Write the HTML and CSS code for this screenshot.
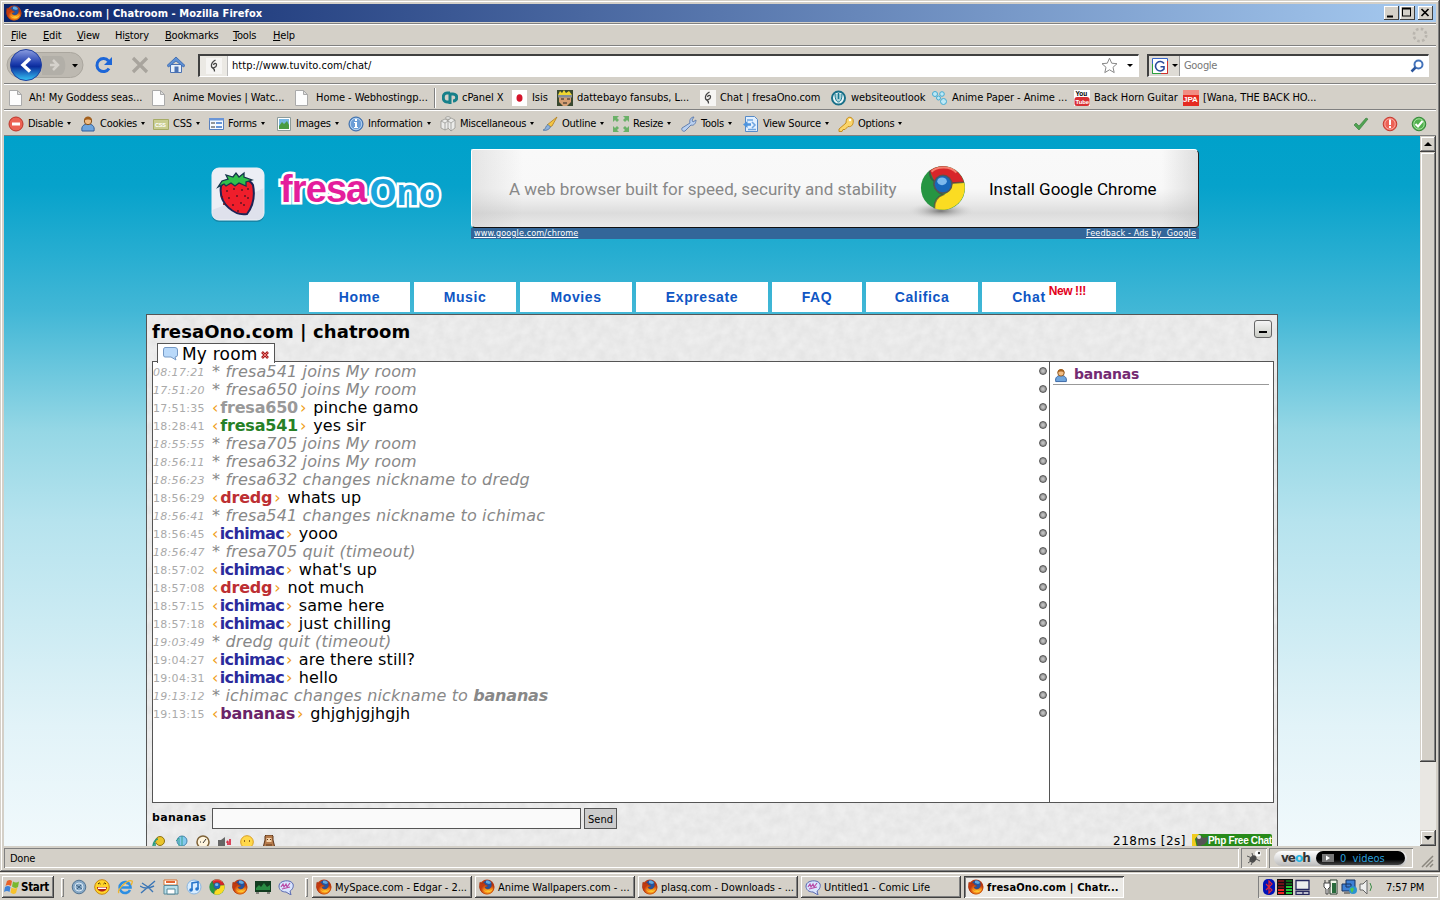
FILE: index.html
```html
<!DOCTYPE html>
<html lang="en">
<head>
<meta charset="utf-8">
<title>fresaOno.com | Chatroom - Mozilla Firefox</title>
<link rel="stylesheet" href="styles.css">
</head>
<body>
<svg class="sprite" aria-hidden="true">
  <defs>
    <linearGradient id="gBack" x1="0" y1="0" x2="0" y2="1"><stop offset="0" stop-color="#8c9ee0"/><stop offset=".45" stop-color="#1e3dae"/><stop offset=".55" stop-color="#0b2c9c"/><stop offset="1" stop-color="#35c4f5"/></linearGradient>
    <radialGradient id="gFox" cx=".6" cy=".7"><stop offset="0" stop-color="#ffc428"/><stop offset=".6" stop-color="#f07a16"/><stop offset="1" stop-color="#c23a10"/></radialGradient>
    <radialGradient id="gShadow"><stop offset="0" stop-color="#777"/><stop offset="1" stop-color="#ddd" stop-opacity="0"/></radialGradient>
  </defs>
  <symbol id="fox" viewBox="0 0 16 16"><circle cx="8" cy="8" r="7.500" fill="url(#gFox)"/><circle cx="8.500" cy="6.200" r="5" fill="#2453a0"/><path d="M7 2c2-1 4 0 5 2l-2 1-3-1z" fill="#62a9df"/><path d="M1 3l2 1.500C5 3.500 6 4 6 5.500l3 1.500-3 1c0 2 3 3 5 1.500 2-1.500 2-4 1.500-6 3 3 3 7 .5 9.500-3 3-8 2.500-10.500-.5S0 6 1 3z" fill="url(#gFox)" stroke="#9b2d0c" stroke-width=".4"/><path d="M4 10c3 4 8 3 10-1-1 5-8 6-10 1z" fill="#ffd43b"/></symbol>
  <symbol id="page" viewBox="0 0 16 16"><path d="M1.500 .5h8l4 4v11h-12z" fill="#fdfdfd" stroke="#aaa"/><path d="M9.500 .5v4h4z" fill="#ddd" stroke="#aaa"/></symbol>
  <symbol id="chatfav" viewBox="0 0 16 16"><path fill="#f6f5f3" d="M0 0h16v16H0z"/><path d="M9.500 2C6 4 5 6 5.500 8.500S10.500 9.500 10.500 7 8 5 7.500 7M6 9.500c1 1 3 1 2.500 4" fill="none" stroke="#444" stroke-width="1.300"/></symbol>
  <symbol id="chrome" viewBox="0 0 48 48"><circle cx="24" cy="24" r="23" fill="#269542"/><path d="M10 6a23 23 0 0 1 36 12L33 19 24 11 15 17z" fill="#d8252a"/><path d="M46 18A23 23 0 0 1 15 45c0-9 3-11 9-14 6-2 9-6 9-12z" fill="#fbdc22"/><path d="M12 7c5-5 19-7 26 1" fill="none" stroke="#f57d6d" stroke-width="2"/><path d="M10 6q0 8 5 11-2 9 9 14-9 3-9 14M33 19l13-1" fill="none" stroke="#444" stroke-opacity=".7" stroke-width="1.800"/><circle cx="24" cy="20" r="10" fill="#555"/><circle cx="24" cy="20" r="8.500" fill="#1768ba"/><ellipse cx="23" cy="17" rx="5" ry="4" fill="#7bb9ed"/></symbol>
  <symbol id="comic" viewBox="0 0 16 16"><path d="M1 7c0-6 12-7 14-2 1 3-1 6-3 7l1 4-5-3C4 13 1 11 1 7z" fill="#d9e5ff" stroke="#5868b0"/><path d="M3 8l2-3 1 3 2-3 1 3 3-4M4 10l4-1 4-1" fill="none" stroke="#b94aa5" stroke-width="1.200"/></symbol>
  <symbol id="smile" viewBox="0 0 16 16"><circle cx="8" cy="8" r="7.300" fill="#ffd529" stroke="#c78712"/><path d="M3 8h10c0 6-10 6-10 0z" fill="#b02318"/><path d="M4 8.500h8v1.500H4z" fill="#fff"/><path d="M4 5q1.500-2 2.500 0M9.500 5q1-2 2.500 0" fill="none" stroke="#3a2500"/></symbol>
  <symbol id="user" viewBox="0 0 16 16"><path d="M2 15c-1-5 2-7 6-7s7 2 6 7z" fill="#6fa5dd" stroke="#2f5d9b"/><circle cx="8" cy="5" r="3.700" fill="#f2bd84" stroke="#80501e"/><path d="M4 5c0-6 8-6 8 0-2-2-6-2-8 0z" fill="#a4601d"/></symbol>
</svg>

<div class="window">
  <header class="titlebar">
    <svg class="i16"><use href="#fox"/></svg>
    <span class="title">fresaOno.com | Chatroom - Mozilla Firefox</span>
    <div class="winbtns">
      <svg class="winbtn" viewBox="0 0 15 13"><path d="M3 9h6v2H3z"/></svg>
      <svg class="winbtn" viewBox="0 0 15 13"><path d="M2 1h9v9H2zM3 3v6h7V3z" fill-rule="evenodd"/></svg>
      <svg class="winbtn close" viewBox="0 0 15 13"><path d="M3.500 2.500l7 7m0-7l-7 7" stroke="#000" stroke-width="1.700"/></svg>
    </div>
  </header>

  <nav class="menubar">
    <span><u>F</u>ile</span><span><u>E</u>dit</span><span><u>V</u>iew</span><span>Hi<u>s</u>tory</span><span><u>B</u>ookmarks</span><span><u>T</u>ools</span><span><u>H</u>elp</span>
    <svg class="throbber" viewBox="0 0 16 16"><circle cx="8" cy="8" r="6.200" fill="none" stroke="#b9b5ae" stroke-width="2.600" stroke-dasharray="2.600 2.270"/></svg>
  </nav>

  <div class="navbar">
    <svg class="backfwd" viewBox="0 0 80 36">
      <rect x="3" y="5.500" width="76" height="25" rx="12.500" fill="#bdb9b1" stroke="#aaa69e"/>
      <path d="M38 9h18c7 0 7 19 0 19H38z" fill="#b2afa8"/>
      <circle cx="22" cy="18" r="15.500" fill="url(#gBack)" stroke="#203f9e"/>
      <path d="M26 11.500l-7 6.500 7 6.500" fill="none" stroke="#fff" stroke-width="3.400"/>
      <path d="M49 13l5 5-5 5M46 18h8" fill="none" stroke="#d5d2cc" stroke-width="2.500"/>
      <path d="M68 17h6l-3 3.500z"/>
    </svg>
    <svg class="ic-reload" viewBox="0 0 18 18"><path d="M14 12.500a6.500 6.500 0 1 1-.5-7.500" fill="none" stroke="#1c66d8" stroke-width="3"/><path d="M17 1v8H9z" fill="#1c66d8"/></svg>
    <svg class="ic-stop" viewBox="0 0 18 18"><path d="M2 2l14 14M16 2L2 16" stroke="#a8a49d" stroke-width="3.200"/></svg>
    <svg class="ic-home" viewBox="0 0 18 18"><path d="M3.500 8.500h11v8h-11z" fill="#e6effa" stroke="#4a72b4"/><path d="M0 9.500L9 1l9 8.500-1.500 1.500L9 5l-7.500 6z" fill="#5c8fd4" stroke="#3563ab" stroke-width=".8"/><path d="M7.500 10.500h4v6h-4z" fill="#4a72b4"/></svg>
    <div class="urlbar">
      <div class="siteicon"><svg class="i16"><use href="#chatfav"/></svg></div>
      <span class="url">http://www.tuvito.com/chat/</span>
      <svg class="star" viewBox="0 0 17 17"><path d="M8.500 1.200l2.200 5 5.300.5-4 3.600 1.200 5.300-4.700-2.800-4.700 2.800L5 10.300 1 6.700l5.300-.5z" fill="#fff" stroke="#888"/></svg>
      <i class="arrow"></i>
    </div>
    <div class="search">
      <div class="engine"><svg class="i16" viewBox="0 0 16 16"><path d="M.5.500h15v15H.5z" fill="#fff" stroke="#3764c8"/><path d="M.5 6v9.500h8" fill="none" stroke="#2ca13c"/><path d="M15.500 3v12.500H9" fill="none" stroke="#d2322d"/><path d="M12 5.500A4.700 4.700 0 1 0 12 11V8.700H8.500" fill="none" stroke="#2a4a9c" stroke-width="1.600"/></svg><i class="arrow"></i></div>
      <span class="ghost">Google</span>
      <svg class="mag" viewBox="0 0 14 14"><circle cx="8.500" cy="5.500" r="4" fill="#fff" stroke="#4373ba" stroke-width="2"/><path d="M5.500 8.500L1.500 12.500" stroke="#2c559b" stroke-width="2.500"/></svg>
    </div>
  </div>

  <div class="bookmarks">
    <span class="bm far"><svg class="i16"><use href="#page"/></svg>Ah! My Goddess seas...</span>
    <span class="bm far"><svg class="i16"><use href="#page"/></svg>Anime Movies | Watc...</span>
    <span class="bm far"><svg class="i16"><use href="#page"/></svg>Home - Webhostingp...</span>
    <i class="sep"></i>
    <span class="bm"><svg class="i16" viewBox="0 0 16 16"><path d="M8 3H5C0 3 0 12 5 12h2M8 14V4h3c5 0 5 7 0 7" fill="none" stroke="#17808a" stroke-width="3"/></svg>cPanel X</span>
    <span class="bm"><svg class="i16" viewBox="0 0 16 16"><path d="M0 0h15v16H0z" fill="#fff"/><ellipse cx="7.500" cy="8" rx="3" ry="3.800" fill="#d4132a"/></svg>Isis</span>
    <span class="bm"><svg class="i16" viewBox="0 0 16 16"><path d="M0 0h16v16H0z" fill="#3a4930"/><path d="M1 5l2-4 2 2 2-3 2 3 3-2 3 4z" fill="#f0d832"/><path d="M2 7h12v5l-4 4H6l-4-4z" fill="#d6a074"/><path d="M1 5h14v2.500H1z" fill="#858f99"/><path d="M4 9h3m3 0h3m-7 4h4" stroke="#222"/></svg>dattebayo fansubs, L...</span>
    <span class="bm"><svg class="i16"><use href="#chatfav"/></svg>Chat | fresaOno.com</span>
    <span class="bm"><svg class="i16" viewBox="0 0 16 16"><circle cx="7.500" cy="8" r="6.500" fill="#edf7f9" stroke="#176f88" stroke-width="2"/><path d="M4 4c0 6 2 8 3.500 8S11 10 11 4" fill="#a9d3da" stroke="#167790"/><path d="M7.500 3v6" stroke="#167790" stroke-width="1.500"/></svg>websiteoutlook</span>
    <span class="bm"><svg class="i16" viewBox="0 0 16 16"><g fill="#bce9f7" stroke="#43abd2"><circle cx="3" cy="4" r="2.500"/><circle cx="10" cy="4" r="2.300"/><circle cx="6.500" cy="8" r="2"/><circle cx="11.500" cy="11.500" r="3"/></g></svg>Anime Paper - Anime ...</span>
    <span class="bm"><svg class="i16" viewBox="0 0 16 16"><path d="M0 0h16v16H0z" fill="#fff"/><rect x=".5" y="7" width="15" height="9" rx="2.500" fill="#d93034"/><text x="1.500" y="6" class="yt">You</text><text x="1.500" y="14" class="yt w">Tube</text></svg>Back Horn Guitar</span>
    <span class="bm"><svg class="i16" viewBox="0 0 16 16"><path d="M0 0h16v16H0z" fill="#e52b22"/><path d="M0 0h16v5H0z" fill="#f18d83"/><text x="0" y="12" class="jpa">JPA</text></svg>[Wana, THE BACK HO...</span>
  </div>

  <div class="devbar">
    <span class="dv"><svg class="i16" viewBox="0 0 16 16"><circle cx="8" cy="8" r="7" fill="#ec6254" stroke="#bb3529"/><path d="M4 6.500h8v3H4z" fill="#fff"/></svg>Disable<i class="arrow"></i></span>
    <span class="dv"><svg class="i16"><use href="#user"/></svg>Cookies<i class="arrow"></i></span>
    <span class="dv"><svg class="i16" viewBox="0 0 16 16"><path d="M.5 3.500h15v10H.5z" fill="#c9cd90" stroke="#a6ac66"/><text x="2" y="11" class="css">CSS</text></svg>CSS<i class="arrow"></i></span>
    <span class="dv"><svg class="i16" viewBox="0 0 16 16"><path d="M1.500 2.500h14v11h-14z" fill="#f7faff" stroke="#5880bd"/><path d="M1 2h15v2.500H1zM8 6h6v2H8zm0 4h6v2H8z" fill="#6a95d6"/><path d="M3 7h4m-4 4h4" stroke="#333"/></svg>Forms<i class="arrow"></i></span>
    <span class="dv"><svg class="i16" viewBox="0 0 16 16"><path d="M1.500 1.500h13v13h-13z" fill="#fff" stroke="#8d9b99"/><path d="M3 3h10v10H3z" fill="#78b7e2"/><path d="M3 10l3-4 2 2 3-3 2 4v4H3z" fill="#4b9b43"/></svg>Images<i class="arrow"></i></span>
    <span class="dv"><svg class="i16" viewBox="0 0 16 16"><circle cx="8" cy="8" r="7" fill="#6a9dd7" stroke="#3668a7"/><circle cx="8" cy="8" r="5.700" fill="none" stroke="#b6d2ef"/><path d="M7 3h2v2H7zm-1 3h3v5h1v1H6v-1h1V7H6z" fill="#fff"/></svg>Information<i class="arrow"></i></span>
    <span class="dv"><svg class="i16" viewBox="0 0 16 16"><g fill="#ececea" stroke="#8e8e8a" stroke-width=".7"><path d="M1 5l4-2 4 2v7l-4 2-4-2z"/><path d="M8 4l3-2 4 2v8l-4 3-3-3z"/><path d="M1 5l4 2 3-2M5 7v7M8 5l3 2 4-3M11 7v8"/><ellipse cx="8" cy="2" rx="2.500" ry="1.300"/></g></svg>Miscellaneous<i class="arrow"></i></span>
    <span class="dv"><svg class="i16" viewBox="0 0 16 16"><path d="M15 1l-5 9-3 1-2-2z" fill="#f5c643" stroke="#b07c1d" stroke-width=".8"/><path d="M6 8.500l2.500 2.500C7 14 3 15 1 14c3 0 2-4 5-5.500z" fill="#8fb2dc" stroke="#4d749f" stroke-width=".8"/></svg>Outline<i class="arrow"></i></span>
    <span class="dv"><svg class="i16" viewBox="0 0 16 16"><path d="M0 0h6L4 2l2 2-2 2-2-2-2 2zM10 0h6v6l-2-2-2 2-2-2 2-2zM0 10l2 2 2-2 2 2-2 2 2 2H0zM16 10v6h-6l2-2-2-2 2-2 2 2z" fill="#6bb168"/></svg>Resize<i class="arrow"></i></span>
    <span class="dv"><svg class="i16" viewBox="0 0 16 16"><path d="M9 7c-1-3 1-6 4-6l-2 3 1 2 3-2c0 4-3 6-5 5l-6 6c-2 1-4-1-3-3z" fill="#b9d0f0" stroke="#6380af"/></svg>Tools<i class="arrow"></i></span>
    <span class="dv"><svg class="i16" viewBox="0 0 16 16"><path d="M2.500.500h9l3 3v12h-12z" fill="#e2f0ff" stroke="#568bc8"/><path d="M4 4h6M9 6l3 3-3 3M5 13.500h8" fill="none" stroke="#6fa5e0" stroke-width="1.500"/><path d="M0 8.500L4.500 5v2.300H8v2.500H4.500V12z" fill="#4e94de"/></svg>View Source<i class="arrow"></i></span>
    <span class="dv"><svg class="i16" viewBox="0 0 16 16"><path d="M8 7L1 13v2.500h3l1-2h2l3-3c4 1 6-3 5-7C13 0 8 0 8 7z" fill="#fbd569" stroke="#c58d1f"/><circle cx="12" cy="4" r="1.200" fill="#fff"/></svg>Options<i class="arrow"></i></span>
    <div class="devstatus">
      <svg class="i16" viewBox="0 0 16 16"><path d="M1 9l2-2 3 3 7-8 2 1-9 11z" fill="#50a352" stroke="#337a39" stroke-width=".6"/></svg>
      <svg class="i16" viewBox="0 0 16 16"><circle cx="8" cy="8" r="6.800" fill="#ec6155" stroke="#c43a2f"/><circle cx="8" cy="8" r="5.200" fill="none" stroke="#ffc4bd" stroke-width=".7"/><path d="M7 3.500h2V9H7zm0 6.500h2v2H7z" fill="#fff"/></svg>
      <svg class="i16" viewBox="0 0 16 16"><circle cx="8" cy="8" r="6.800" fill="#51b14d" stroke="#35873a"/><circle cx="8" cy="8" r="5.200" fill="none" stroke="#c9f0c3" stroke-width=".7"/><path d="M4.500 8l2.500 2.500L11.500 5" fill="none" stroke="#fff" stroke-width="2"/></svg>
    </div>
  </div>

  <div class="viewport">
    <main class="page">
      <div class="top">
        <svg class="berry" viewBox="0 0 56 58">
          <rect x="2" y="4" width="52" height="52" rx="7" fill="#16708d" opacity=".6"/>
          <rect x="2" y="2" width="52" height="52" rx="7" fill="#dfe1ec" stroke="#eef0f6"/>
          <path d="M2 10q0-8 8-8h36q8 0 8 8v12Q30 34 2 44z" fill="#eceef5"/>
          <path d="M11 20c4-8 27-10 32-1 2 10 0 21-6 29-11 2-29-9-26-28z" fill="#ef1e2b" stroke="#1d2456" stroke-width="2"/>
          <path d="M8 21l4-6 6-2-2-4 7 2 3-4 3 4 5-4 0 4 8 3-6 2 0 4-7-3-4 3-4-3-5 3-2-2z" fill="#30c04b" stroke="#17364c" stroke-width="1.300"/>
          <path d="M17 24v2m7-4v2m8-1v2m6-3v2m-19 7v2m8-4v2m8-2v2m-12 7v2m8-4v2m-3 6v2m6-8v2m4-9v2m-24 4v2m-2-9v2" stroke="#6a1423" stroke-width="1.600"/>
        </svg>
        <h1 class="logo"><span class="pink">fresa</span><span class="blue">Ono</span></h1>
        <div class="ad">
          <div class="banner">
            <span class="slogan">A web browser built for speed, security and stability</span>
            <svg class="chromelogo" viewBox="0 0 72 60"><ellipse cx="34" cy="50" rx="34" ry="9" fill="url(#gShadow)"/><use href="#chrome" x="10" y="4" width="52" height="46"/></svg>
            <span class="install">Install Google Chrome</span>
          </div>
          <div class="adfoot"><u>www.google.com/chrome</u><u>Feedback - Ads by&nbsp; Google</u></div>
        </div>
      </div>

      <nav class="tabs"><a>Home</a><a>Music</a><a>Movies</a><a>Expresate</a><a>FAQ</a><a>Califica</a><a>Chat<sup>New !!!</sup></a></nav>

      <section class="chat">
        <div class="chathead">
          <h2>fresaOno.com | chatroom</h2>
          <button class="min"><i></i></button>
        </div>
        <div class="roomtabs">
          <div class="room">
            <svg class="bubble" viewBox="0 0 15 14"><path d="M2 .5h10q2.500 0 2.500 2.500v5q0 2-2.500 2l1 3-5-3H2q-1.500 0-1.500-2V3Q.5.500 2 .5z" fill="#b9d9fa" stroke="#7599c5"/></svg>
            <span>My room</span>
            <svg class="x" viewBox="0 0 8 8"><path d="M1 1l6 6m0-6L1 7" stroke="#a41e1e" stroke-width="2.600"/><path d="M1.500 1.500l5 5m0-5l-5 5" stroke="#f07a76" stroke-width="1"/></svg>
          </div>
        </div>
        <div class="panes">
          <div class="log">
            <p class="sys"><time>08:17:21</time><span>* fresa541 joins My room</span></p>
            <p class="sys"><time>17:51:20</time><span>* fresa650 joins My room</span></p>
            <p><time>17:51:35</time><span><b class="n-gray">fresa650</b>pinche gamo</span></p>
            <p><time>18:28:41</time><span><b class="n-green">fresa541</b>yes sir</span></p>
            <p class="sys"><time>18:55:55</time><span>* fresa705 joins My room</span></p>
            <p class="sys"><time>18:56:11</time><span>* fresa632 joins My room</span></p>
            <p class="sys"><time>18:56:23</time><span>* fresa632 changes nickname to dredg</span></p>
            <p><time>18:56:29</time><span><b class="n-red">dredg</b>whats up</span></p>
            <p class="sys"><time>18:56:41</time><span>* fresa541 changes nickname to ichimac</span></p>
            <p><time>18:56:45</time><span><b class="n-blue">ichimac</b>yooo</span></p>
            <p class="sys"><time>18:56:47</time><span>* fresa705 quit (timeout)</span></p>
            <p><time>18:57:02</time><span><b class="n-blue">ichimac</b>what's up</span></p>
            <p><time>18:57:08</time><span><b class="n-red">dredg</b>not much</span></p>
            <p><time>18:57:15</time><span><b class="n-blue">ichimac</b>same here</span></p>
            <p><time>18:57:18</time><span><b class="n-blue">ichimac</b>just chilling</span></p>
            <p class="sys"><time>19:03:49</time><span>* dredg quit (timeout)</span></p>
            <p><time>19:04:27</time><span><b class="n-blue">ichimac</b>are there still?</span></p>
            <p><time>19:04:31</time><span><b class="n-blue">ichimac</b>hello</span></p>
            <p class="sys"><time>19:13:12</time><span>* ichimac changes nickname to <strong>bananas</strong></span></p>
            <p><time>19:13:15</time><span><b class="n-purple">bananas</b>ghjghjgjhgjh</span></p>
          </div>
          <aside class="users">
            <div class="member"><svg class="face" viewBox="0 0 16 16"><use href="#user"/></svg><span>bananas</span></div>
          </aside>
        </div>
        <div class="compose">
          <label>bananas</label><div class="field"></div><div class="send">Send</div>
        </div>
        <div class="tools">
          <svg class="t" viewBox="0 0 14 14"><circle cx="8" cy="6" r="4.500" fill="#eac52b" stroke="#8f7315"/><path d="M1 12c0-5 3-8 5-8M3 12V8" fill="none" stroke="#2a9a7b" stroke-width="1.600"/></svg>
          <svg class="t" viewBox="0 0 14 14"><circle cx="8" cy="6" r="5" fill="#83c9ee" stroke="#4784ad"/><path d="M8 1v10M2 6l3-3v8" fill="none" stroke="#37a190"/></svg>
          <svg class="t" viewBox="0 0 14 14"><circle cx="7" cy="7" r="6" fill="#fff5de" stroke="#7e6238" stroke-width="1.500"/><path d="M7 8l3-4M4 7h1" stroke="#333"/></svg>
          <svg class="t" viewBox="0 0 14 14"><path d="M0 5h3l4-3v9H0z" fill="#666"/><path d="M9 8q1-4 1 2m2-6v6" fill="none" stroke="#d8334a" stroke-width="1.800"/></svg>
          <svg class="t" viewBox="0 0 14 14"><circle cx="7" cy="7" r="6.300" fill="#ffd84a" stroke="#d99e22"/><path d="M4 6h1m4 0h1" stroke="#73460b" stroke-width="1.500"/></svg>
          <svg class="t" viewBox="0 0 14 14"><path d="M3 1l1-1h6l1 1v4l2 8H1l2-8z" fill="#b57a4b" stroke="#5c361b"/><path d="M4.500 3h5v4h-5z" fill="#f4d4ae"/><path d="M5 4.500h1m2 0h1M4 10h6" stroke="#5c361b"/></svg>
          <span class="ping">218ms [2s]</span>
          <div class="pfc"><svg viewBox="0 0 16 14"><path d="M0 0h7l-4 5 2 9H0z" fill="#f1cb1e"/><path d="M4 4q5-5 7 0l5-1q-1 8-6 8L6 14z" fill="#555"/><circle cx="7" cy="3" r="2" fill="#ddd"/></svg><span>Php Free Chat</span></div>
        </div>
      </section>
    </main>
    <div class="scroll">
      <div class="sbtn"><i class="up"></i></div><div class="thumb"></div><div class="track"></div><div class="sbtn"><i class="down"></i></div>
    </div>
  </div>

  <footer class="status">
    <div class="msg">Done</div>
    <div class="bug"><svg class="i16" viewBox="0 0 16 16"><ellipse cx="7" cy="9" rx="3" ry="4" transform="rotate(40 7 9)" fill="#494949"/><path d="M1 6l5 2M2 13l4-3M5 15l2-4M6 3l1 4m3 2l4 2m-4-5l3-5" stroke="#555"/><circle cx="12" cy="3.500" r="3" fill="#fff"/><circle cx="13" cy="3" r="1.200" fill="#333"/></svg></div>
    <div class="veohcell"><div class="veoh"><b>ve<em>o</em>h</b><span><svg viewBox="0 0 12 8"><path d="M0 0h12v8H0z" fill="#777"/><path d="M4 1.500v5L8 4z" fill="#fff"/></svg>0&nbsp; videos</span></div></div>
    <svg class="grip" viewBox="0 0 14 14"><path d="M2 13L13 2M6 13l7-7M10 13l3-3" stroke="#8b877f" stroke-width="1.500"/></svg>
  </footer>
</div>

<div class="taskbar">
  <div class="start"><svg viewBox="0 0 16 16"><path d="M3 2q3-2 5 0L7 7Q4 5 1.500 7z" fill="#e8632b"/><path d="M9 2.500q3 2 6 0L14 8q-3 2-6-.5z" fill="#79b82d"/><path d="M1 8q3-2 5.500 0L5.500 13Q3 11 0 13z" fill="#3f83d8"/><path d="M7.500 8.500q3 2 6 0L12 14q-3 2-5.500-.5z" fill="#f7c22c"/></svg>Start</div>
  <i class="tsep"></i>
  <div class="quick">
    <svg class="i16" viewBox="0 0 16 16"><circle cx="8" cy="8" r="6.800" fill="#86a8c6" stroke="#527391"/><circle cx="8" cy="8" r="4" fill="none" stroke="#dbe9f4"/><path d="M5 6l6 4M6 10l4-4" stroke="#3f6384"/></svg>
    <svg class="i16"><use href="#smile"/></svg>
    <svg class="i16" viewBox="0 0 16 16"><path d="M13 6A5.500 5.500 0 1 0 13 11M3 8.500h10.500C13.500 6 12 4 9 4" fill="none" stroke="#2c8ee2" stroke-width="2.600"/><path d="M2 14C-1 11 11 0 15 2c1 1 0 2-1 4" fill="none" stroke="#efb52d" stroke-width="1.300"/></svg>
    <svg class="i16" viewBox="0 0 16 16"><path d="M1 14L15 2M2 4l6 4 5 5M0 7q6 4 14 0" fill="none" stroke="#3b76b6" stroke-width="1.400"/></svg>
    <svg class="i16" viewBox="0 0 16 16"><path d="M1 1h13v5H1z" fill="#fff" stroke="#d77331"/><path d="M1 6.500h14V15H1z" fill="#b9dfea" stroke="#568899"/><path d="M4 10h8v5H4z" fill="#fff" stroke="#568899"/><path d="M3 3h9" stroke="#e56530" stroke-width="2"/></svg>
    <svg class="i16" viewBox="0 0 16 16"><circle cx="8" cy="8" r="7" fill="#d9edff" stroke="#8ab6e0"/><path d="M6 11V4l6-1v7" fill="none" stroke="#2675cb" stroke-width="1.600"/><circle cx="5" cy="11" r="1.800" fill="#2675cb"/><circle cx="11" cy="10" r="1.800" fill="#2675cb"/></svg>
    <svg class="i16"><use href="#chrome"/></svg>
    <svg class="i16"><use href="#fox"/></svg>
    <svg class="i16" viewBox="0 0 16 16"><path d="M0 2h16v11H0z" fill="#123c20"/><path d="M1 9l3-3 2 2 3-4 3 4 3-2v5H1z" fill="#298b43"/><path d="M1 14h3m8 0h3" stroke="#333"/></svg>
    <svg class="i16"><use href="#comic"/></svg>
  </div>
  <i class="tsep"></i>
  <div class="task"><svg class="i16"><use href="#fox"/></svg>MySpace.com - Edgar - 2...</div>
  <div class="task"><svg class="i16"><use href="#fox"/></svg>Anime Wallpapers.com - ...</div>
  <div class="task"><svg class="i16"><use href="#fox"/></svg>plasq.com - Downloads - ...</div>
  <div class="task"><svg class="i16"><use href="#comic"/></svg>Untitled1 - Comic Life</div>
  <div class="task on"><svg class="i16"><use href="#fox"/></svg>fresaOno.com | Chatr...</div>
  <div class="tray">
    <svg width="12" height="16" viewBox="0 0 12 16"><rect width="12" height="16" rx="5" fill="#0013b8"/><path d="M3 5l6 6-3 3V2l3 3-6 6" fill="none" stroke="#e42632" stroke-width="1.200"/></svg>
    <svg width="16" height="16" viewBox="0 0 16 16"><path d="M0 0h16v16H0z" fill="#111"/><path d="M1 1h6v2H1zm0 3h6v2H1zm0 3h6v2H1z" fill="#6f1118"/><path d="M1 10h6v2H1zm0 3h6v2H1z" fill="#e22"/><path d="M9 1h6v2H9zm0 3h6v2H9z" fill="#116118"/><path d="M9 7h6v2H9zm0 3h6v2H9zm0 3h6v2H9z" fill="#21cb38"/></svg>
    <svg width="16" height="16" viewBox="0 0 16 16"><path d="M1 1.500h13v9H1zM1 12.500h13v3H1zM8 12v3" fill="#eee" stroke="#26275e" stroke-width="1.300"/></svg>
    <svg class="gapl" width="16" height="16" viewBox="0 0 16 16"><path d="M7 1h7v14H7z" fill="#eef5e8" stroke="#263a2c"/><path d="M9 4h4v10H9z" fill="#286b3c"/><path d="M1 4h6v4l-2 2v5H3v-5L1 8zM2 1v3m4-3v3" fill="#fff" stroke="#444"/></svg>
    <svg width="16" height="16" viewBox="0 0 16 16"><path d="M5 1h9v7H5zM1 5h9v7H1z" fill="#3d80d5" stroke="#173261"/><path d="M3 14h6" stroke="#333"/><circle cx="12" cy="11" r="4" fill="#2b92d1"/><path d="M9 10q3-3 4 0l-2 4z" fill="#4fc550"/></svg>
    <svg width="16" height="16" viewBox="0 0 16 16"><path d="M1 5h3l4-4v14l-4-4H1z" fill="#eee" stroke="#666"/><path d="M11 4q3 4 0 8" fill="none" stroke="#388b45"/></svg>
    <span>7:57 PM</span>
  </div>
</div>
</body>
</html>
```

FILE: styles.css
```css
* { box-sizing: border-box; }
body { margin: 0; width: 1440px; height: 900px; overflow: hidden; background: #d4d0c8; color: #000;
  font-family: "DejaVu Sans Condensed", "DejaVu Sans", Tahoma, sans-serif; font-size: 11px; font-stretch: condensed; letter-spacing: -.25px; white-space: nowrap; display: flex; flex-direction: column; }
.sprite { position: absolute; width: 0; height: 0; }
.i16 { width: 16px; height: 16px; flex: none; display: block; }
.arrow { border: 3px solid transparent; border-top-color: #000; border-bottom: 0; width: 0; height: 0; flex: none; }

.window { height: 872px; flex: none; display: flex; flex-direction: column; padding: 4px 4px 0; background: #d4d0c8;
  box-shadow: inset -1px -1px #404040, inset 1px 1px #d4d0c8, inset -2px -2px #808080, inset 2px 2px #fff; }
.titlebar { height: 18px; display: flex; align-items: center; padding: 0 3px 0 2px; background: linear-gradient(90deg, #0a246a, #a6caf0); color: #fff; }
.title { font-weight: bold; font-size: 11px; margin-left: 2px; flex: 1; letter-spacing: .07px; }
.winbtns { display: flex; }
.winbtn { width: 15px; height: 14px; background: #d4d0c8; box-shadow: inset -1px -1px #404040, inset 1px 1px #fff; }
.winbtn + .winbtn { margin-left: 1px; }
.winbtn.close { margin-left: 3px; }

.menubar, .navbar, .bookmarks, .devbar { border-bottom: 1px solid #808080; box-shadow: 0 1px #fff; display: grid; align-items: center; flex: none; margin-bottom: 1px; }
.menubar { height: 23px; border-top: 1px solid #808080; margin-top: 1px; box-shadow: inset 0 1px #fff, 0 1px #fff; padding-left: 7px; grid-template-columns: 32px 34px 38px 50px 68px 40px 1fr 24px; padding-top: 1px; letter-spacing: -.2px; }
.throbber { width: 16px; height: 16px; }
.navbar { height: 37px; grid-template-columns: 91px 36px 36px 31px 941px 8px 282px; }
.backfwd { width: 80px; height: 36px; }
.ic-reload, .ic-stop, .ic-home { width: 18px; height: 18px; }
.urlbar, .search { height: 23px; background: #fff; border: 1px solid #808080; border-top: 2px solid #404040; border-right-color: #fff; border-bottom-color: #fff; display: flex; align-items: center; }
.urlbar { border-left: 2px solid #404040; padding-right: 5px; }
.siteicon { width: 28px; height: 100%; background: #ebe9e4; display: flex; align-items: center; justify-content: center; border-right: 1px solid #bbb; }
.url { margin-left: 4px; flex: 1; letter-spacing: .06px; }
.star { width: 17px; height: 17px; margin-right: 9px; }
.search { grid-column: 7; border-left: 2px solid #404040; padding-right: 11px; }
.engine { display: flex; align-items: center; gap: 4px; width: 31px; height: 100%; padding-left: 3px; border-right: 1px solid #999; background: #dedbd5; }
.ghost { color: #777; flex: 1; margin-left: 4px; letter-spacing: -.3px; }
.mag { width: 14px; height: 14px; margin-right: -7px; }
.bookmarks { height: 25px; padding-left: 4px; grid-template-columns: 143px 143px 140px 8px 70px 45px 143px 131px 101px 142px 109px 160px; letter-spacing: -.06px; padding-top: 1px; }
.bm { display: flex; align-items: center; gap: 4px; }
.bm.far { gap: 6px; }
.bm.far:first-child { gap: 5px; letter-spacing: -.1px; }
.sep { width: 2px; height: 20px; background: #808080; border-right: 1px solid #fff; }
.yt { font: bold 6.500px "Liberation Sans Narrow", "Liberation Sans", sans-serif; }
.yt.w { fill: #fff; font-size: 6px; }
.jpa { font: bold 8px "Liberation Sans", sans-serif; fill: #fff; }
.css { font: bold 5.500px "Liberation Sans", sans-serif; fill: #fff; }
.devbar { height: 25px; padding-left: 4px; margin-bottom: 0; box-shadow: none; grid-template-columns: 72px 73px 55px 68px 72px 92px 102px 71px 68px 62px 95px 80px 1fr; padding-top: 1px; }
.dv { display: flex; align-items: center; gap: 4px; }
.dv .arrow { border-width: 3px 2.500px 0; }
.devstatus { display: flex; gap: 13px; justify-content: flex-end; padding-right: 9px; }

.viewport { height: 710px; flex: none; display: flex; }
.page { width: 1416px; overflow: hidden; background: linear-gradient(#00a1ca 0, #06a2cb 50px, #42b7d6 175px, #95d7e5 295px, #b6e3ee 385px, #e2f3f8 590px, #f1f9fc 710px); display: flex; flex-direction: column; align-items: flex-start; }
.top { height: 146px; flex: none; display: flex; padding: 13px 0 0 206px; }
.berry { width: 56px; height: 58px; margin-top: 17px; }
.logo { width: 204px; margin: 17px 0 0 14px; font: bold 38px/46px "Liberation Sans", sans-serif; letter-spacing: -.9px; -webkit-text-stroke: 5px #fff; stroke-linejoin: round; paint-order: stroke fill; display: flex; align-items: flex-start; }
.pink { color: #e41e9c; width: 89px; }
.blue { color: #1ca5dc; font: bold 35px/52px "Open Sans", sans-serif; letter-spacing: -.6px; }
.ad { width: 728px; margin-left: -13px; }
.banner { height: 79px; border: 1px solid #fff; border-right-color: #222; border-bottom: 1px solid #111; border-radius: 2px 5px 4px 4px; background: linear-gradient(90deg, rgba(190,190,190,.35), transparent 7%, transparent 95%, rgba(190,190,190,.45)), linear-gradient(#f9f9f9, #f8f8f8 50%, #ececec 66%, #dcdcdc 82%, #eaeaea); display: flex; align-items: center; font: 17px Roboto, sans-serif; letter-spacing: 0; }
.slogan { margin-left: 37px; width: 398px; color: #888; }
.chromelogo { width: 72px; height: 60px; margin-top: 4px; }
.install { margin-left: 10px; }
.adfoot { height: 11px; background: #336699; color: #fff; font: 9px/11px "DejaVu Sans Condensed", sans-serif; display: flex; justify-content: space-between; padding: 0 3px; letter-spacing: .1px; }

.tabs { display: grid; flex: none; grid-template-columns: 101px 102px 112px 132px 90px 112px 134px; gap: 4px; margin-left: 305px; height: 32px; }
.tabs a { height: 30px; background: #fff; color: #0f56c4; font: bold 14px/30px "Liberation Sans", sans-serif; letter-spacing: .6px; text-align: center; }
.tabs sup { color: #e2001a; font-size: 12px; letter-spacing: -.4px; line-height: 1px; margin-left: 3px; vertical-align: 7px; }

.chat { margin-left: 142px; width: 1132px; height: 560px; flex: none; border: 1px solid #555; font-family: "DejaVu Sans", Verdana, sans-serif; font-stretch: normal; letter-spacing: 0; padding: 0 3px 0 5px;
  background: #e4e4e4 url("data:image/svg+xml,%3Csvg xmlns='http://www.w3.org/2000/svg' width='200' height='200'%3E%3Cfilter id='n' x='0' y='0' width='1' height='1'%3E%3CfeTurbulence type='fractalNoise' baseFrequency='.1' numOctaves='4' stitchTiles='stitch'/%3E%3CfeColorMatrix values='0 0 0 0 1 0 0 0 0 1 0 0 0 0 1 .6 0 0 0 -.1'/%3E%3C/filter%3E%3Crect width='200' height='200' filter='url(%23n)'/%3E%3C/svg%3E"); }
.chathead { height: 28px; display: flex; justify-content: space-between; }
.chathead h2 { margin: 6px 0 0; font-size: 18px; line-height: 22px; letter-spacing: .07px; }
.min { width: 18px; height: 18px; padding: 0; margin: 5px 2px 0 0; border: 1px solid #666; border-radius: 3px; background: linear-gradient(#f5f5f5, #c9cbc4); display: flex; align-items: center; justify-content: center; }
.min i { width: 8px; height: 2px; background: #000; margin-top: 6px; }
.roomtabs { height: 18px; padding-left: 5px; }
.room { width: 118px; height: 20px; position: relative; background: #fff; border: 1px solid #555; border-bottom: 0; display: flex; align-items: center; font-size: 17px; padding-left: 5px; letter-spacing: .2px; }
.bubble { width: 15px; height: 14px; margin-right: 4px; flex: none; }
.room .x { width: 8px; height: 8px; margin-left: 3px; margin-top: 3px; flex: none; }
.panes { height: 442px; width: 1122px; display: grid; grid-template-columns: 897px 1fr; border: 1px solid #555; background: #fff; }
.log { border-right: 1px solid #555; }
.log p { margin: 0; height: 18px; line-height: 18px; font-size: 16px; display: grid; grid-template-columns: 59px 1fr 6px; padding-right: 4px; align-items: center; letter-spacing: .1px; }
.log p::after { content: ""; width: 6px; height: 6px; border-radius: 50%; border: 1px solid #555; background: radial-gradient(#ccc, #777); margin-top: -2px; }
.log time { color: #aaa; font-size: 11px; padding-top: 2px; letter-spacing: .3px; }
.log .sys { font-style: italic; color: #888; letter-spacing: .15px; }
.log .sys strong { letter-spacing: -.2px; }
.log b { margin-right: 7px; letter-spacing: -.2px; }
.log b::before, .log b::after { color: #f0a020; font-weight: normal; }
.log b::before { content: "‹"; margin-right: 2px; }
.log b::after { content: "›"; margin-left: 2px; }
.log .n-blue { letter-spacing: -.65px; }
.n-gray { color: #999; } .n-green { color: #268026; } .n-red { color: #bd2f33; } .n-blue { color: #2b2b9c; } .n-purple { color: #6b2468; }
.users { padding: 2px 4px 0 3px; }
.member { height: 21px; border-bottom: 1px solid #999; display: flex; align-items: center; color: #742a72; font: bold 14px "DejaVu Sans", sans-serif; letter-spacing: -.2px; }
.face { width: 14px; height: 15px; margin: 2px 6px 0 1px; }
.compose { display: flex; padding-top: 5px; height: 29px; }
.compose label { width: 60px; font-weight: bold; font-size: 11px; line-height: 19px; letter-spacing: .3px; }
.field { width: 369px; height: 21px; border: 1px solid #555; background: #fafafa; }
.send { width: 33px; height: 21px; margin-left: 3px; border: 1px solid #555; background: #ccc; font: 11px/21px "DejaVu Sans Condensed", sans-serif; text-align: center; letter-spacing: 0; }
.tools { display: flex; align-items: flex-start; padding-top: 3px; }
.t { width: 14px; height: 14px; margin-right: 8px; flex: none; }
.ping { margin-left: auto; font-size: 12px; line-height: 12px; margin-right: 6px; letter-spacing: .5px; }
.pfc { width: 80px; height: 15px; margin: -1px 2px 0 0; background: #278a19; color: #fff; border-radius: 2px; font: bold 10px/13px "Liberation Sans Narrow", "Liberation Sans", sans-serif; display: flex; }
.pfc svg { width: 16px; height: 14px; flex: none; }
.pfc span { letter-spacing: -.3px; }

.scroll { width: 16px; display: flex; flex-direction: column; background: #e9e7e3; }
.sbtn, .thumb { background: #d4d0c8; box-shadow: inset -1px -1px #404040, inset 1px 1px #d4d0c8, inset -2px -2px #808080, inset 2px 2px #fff; }
.sbtn { height: 16px; display: flex; align-items: center; justify-content: center; }
.up, .down { border: 4px solid transparent; width: 0; height: 0; }
.up { border-bottom-color: #000; border-top: 0; }
.down { border-top-color: #000; border-bottom: 0; }
.thumb { height: 610px; }
.track { flex: 1; }

.status { margin-top: 2px; display: grid; grid-template-columns: 1235px 26px 144px 21px; gap: 2px; height: 20px; }
.status > div { box-shadow: inset 1px 1px #808080, inset -1px -1px #fff; display: flex; align-items: center; }
.msg { padding-left: 6px; }
.bug { justify-content: center; }
.veohcell { padding: 0 5px; }
.veoh { width: 133px; height: 15px; border-radius: 8px; background: linear-gradient(#fff, #bbb); display: flex; align-items: center; padding: 0 2px 0 7px; justify-content: space-between; }
.veoh b { font: bold 12px/13px "DejaVu Sans", sans-serif; color: #333; letter-spacing: -1px; }
.veoh em { color: #28b6e3; font-style: normal; }
.veoh span { width: 89px; height: 14px; border-radius: 7px; background: linear-gradient(#000 60%, #444); color: #2a9fd8; display: flex; align-items: center; padding-left: 6px; line-height: 13px; letter-spacing: 0; }
.veoh svg { width: 12px; height: 8px; margin-right: 6px; }
.grip { width: 14px; height: 14px; align-self: end; margin-left: 5px; }

.taskbar { height: 28px; border-top: 1px solid #d4d0c8; box-shadow: inset 0 1px #fff; display: flex; align-items: flex-start; padding: 3px 2px 0; }
.start, .task { height: 22px; display: flex; align-items: center; box-shadow: inset -1px -1px #404040, inset 1px 1px #fff, inset -2px -2px #808080; flex: none; }
.start { width: 52px; font-weight: bold; font-size: 11.500px; letter-spacing: -.3px; padding-left: 2px; gap: 1px; }
.start svg { width: 16px; height: 16px; }
.tsep { width: 3px; height: 19px; margin: 2px 7px 0 7px; box-shadow: inset 1px 1px #fff, inset -1px -1px #808080; flex: none; }
.quick { display: flex; gap: 7px; padding-top: 3px; width: 227px; margin-right: 4px; }
.tsep ~ .tsep { margin: 2px 4px 0 3px; }
.task { width: 160px; margin-right: 3px; padding-left: 4px; gap: 3px; letter-spacing: -.05px; }
.task.on { background: #eceae6; font-weight: bold; box-shadow: inset 1px 1px #404040, inset -1px -1px #fff, inset 2px 2px #808080; letter-spacing: .15px; }
.tray { margin-left: auto; width: 180px; height: 22px; display: flex; align-items: center; padding-left: 5px; gap: 2px; box-shadow: inset 1px 1px #808080, inset -1px -1px #fff; }
.tray svg { flex: none; }
.tray .gapl { margin-left: 10px; }
.tray span { margin-left: 9px; }
```
